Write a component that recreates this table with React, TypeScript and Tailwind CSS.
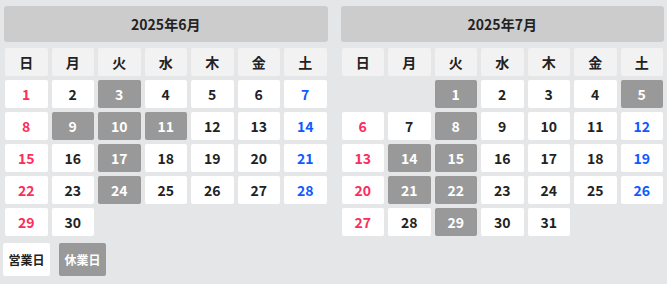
const WEEK = ['日', '月', '火', '水', '木', '金', '土']

interface MonthData {
  title: string
  offset: number
  days: number
  closed: number[]
}

const months: MonthData[] = [
  { title: '2025年6月', offset: 0, days: 30, closed: [3, 9, 10, 11, 17, 24] },
  { title: '2025年7月', offset: 2, days: 31, closed: [1, 5, 8, 14, 15, 21, 22, 29] },
]

function Month({ month }: { month: MonthData }) {
  const cells: (number | null)[] = []
  for (let i = 0; i < month.offset; i++) cells.push(null)
  for (let d = 1; d <= month.days; d++) cells.push(d)

  return (
    <div>
      <div className="h-9 flex items-center justify-center bg-[#cccccc] rounded-[3px] text-[14px] font-bold text-[#222]">
        {month.title}
      </div>
      <div className="mt-[6px] px-[1px] grid grid-cols-7 gap-x-[4px] gap-y-[4px]">
        {WEEK.map((w) => (
          <div
            key={w}
            className="h-7 flex items-center justify-center bg-[#f2f2f2] rounded-[2px] text-[14px] font-bold text-[#222]"
          >
            {w}
          </div>
        ))}
        {cells.map((d, i) => {
          if (d === null) return <div key={'e' + i} className="h-7" />
          const col = i % 7
          const closed = month.closed.includes(d)
          let color = 'text-[#222]'
          if (closed) color = 'text-white'
          else if (col === 0) color = 'text-[#fb2d5a]'
          else if (col === 6) color = 'text-[#0d5bff]'
          return (
            <div
              key={d}
              className={`h-7 flex items-center justify-center rounded-[2px] text-[14px] font-bold ${
                closed ? 'bg-[#999999]' : 'bg-white'
              } ${color}`}
            >
              {d}
            </div>
          )
        })}
      </div>
    </div>
  )
}

export default function App() {
  return (
    <div
      className="min-h-screen bg-[#e5e6e8] pt-[6px]"
      style={{ fontFamily: '"Noto Sans CJK JP", "Noto Sans", sans-serif' }}
    >
      <div className="grid grid-cols-2 gap-x-[13px] pl-1 pr-[3px]">
        {months.map((m) => (
          <Month key={m.title} month={m} />
        ))}
      </div>
      <div className="mt-[7px] pl-[3px] flex gap-[9px]">
        <div className="w-[47px] h-[33px] flex items-center justify-center bg-white rounded-[2px] text-[12px] font-bold text-[#222]">
          営業日
        </div>
        <div className="w-[47px] h-[33px] flex items-center justify-center bg-[#999999] rounded-[2px] text-[12px] font-bold text-white">
          休業日
        </div>
      </div>
    </div>
  )
}
